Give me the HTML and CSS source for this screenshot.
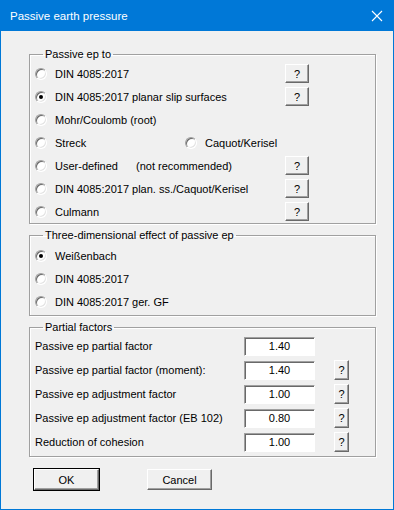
FILE: index.html
```html
<!DOCTYPE html>
<html lang="en">
<head>
  <meta charset="UTF-8">
  <title>Passive earth pressure</title>
  <link rel="stylesheet" href="styles.css">
</head>
<body>
  <div class="window">
    <div class="titlebar">
      <span class="title">Passive earth pressure</span>
      <svg class="close" width="12" height="12" viewBox="0 0 12 12">
        <path d="M1 1 L11 11 M11 1 L1 11" stroke="#fff" stroke-width="1.1" fill="none"/>
      </svg>
    </div>
    <div class="content">
      <fieldset class="group group-ep">
        <legend>Passive ep to</legend>
        <div class="row"><span class="radio"></span><span class="label">DIN 4085:2017</span><button class="help">?</button></div>
        <div class="row"><span class="radio checked"></span><span class="label">DIN 4085:2017 planar slip surfaces</span><button class="help">?</button></div>
        <div class="row"><span class="radio"></span><span class="label">Mohr/Coulomb (root)</span></div>
        <div class="row">
          <span class="radio"></span><span class="label label-short">Streck</span>
          <span class="radio"></span><span class="label">Caquot/Kerisel</span>
        </div>
        <div class="row"><span class="radio"></span><span class="label label-user">User-defined</span><span class="label note">(not recommended)</span><button class="help">?</button></div>
        <div class="row"><span class="radio"></span><span class="label">DIN 4085:2017 plan. ss./Caquot/Kerisel</span><button class="help">?</button></div>
        <div class="row"><span class="radio"></span><span class="label">Culmann</span><button class="help">?</button></div>
      </fieldset>

      <fieldset class="group group-3d">
        <legend>Three-dimensional effect of passive ep</legend>
        <div class="row"><span class="radio checked"></span><span class="label">Weißenbach</span></div>
        <div class="row"><span class="radio"></span><span class="label">DIN 4085:2017</span></div>
        <div class="row"><span class="radio"></span><span class="label">DIN 4085:2017 ger. GF</span></div>
      </fieldset>

      <fieldset class="group group-factors">
        <legend>Partial factors</legend>
        <div class="frow"><span class="flabel">Passive ep partial factor</span><span class="field">1.40</span></div>
        <div class="frow"><span class="flabel">Passive ep partial factor (moment):</span><span class="field">1.40</span><button class="help help-small">?</button></div>
        <div class="frow"><span class="flabel">Passive ep adjustment factor</span><span class="field">1.00</span><button class="help help-small">?</button></div>
        <div class="frow"><span class="flabel">Passive ep adjustment factor (EB 102)</span><span class="field">0.80</span><button class="help help-small">?</button></div>
        <div class="frow"><span class="flabel">Reduction of cohesion</span><span class="field">1.00</span><button class="help help-small">?</button></div>
      </fieldset>

      <div class="actions">
        <button class="btn btn-default">OK</button>
        <button class="btn">Cancel</button>
      </div>
    </div>
  </div>
</body>
</html>
```

FILE: styles.css
```css
:root {
  --blue: #0078d7;
  --face: #f0f0f0;
  --shadow: #a0a0a0;
  --dark: #696969;
  --text: #000;
}
html, body {
  margin: 0;
  padding: 0;
  background: var(--face);
}
.window {
  width: 394px;
  height: 510px;
  box-sizing: border-box;
  border: 1px solid var(--blue);
  background: var(--face);
  font-family: 'Liberation Sans', Arial, sans-serif;
  font-size: 11px;
  color: var(--text);
}
.titlebar {
  height: 30px;
  background: var(--blue);
  display: flex;
  align-items: center;
  justify-content: space-between;
  padding: 0 10px 0 9px;
}
.title {
  color: #fff;
  font-size: 11.5px;
}
.close {
  display: block;
}
.content {
  padding: 16px 17px 0 28px;
}
.group {
  margin: 0 0 4px 0;
  padding: 1px 0 1px 5px;
  min-width: 0;
  border: 1px solid var(--shadow);
  box-shadow: inset 1px 1px 0 #fff, 1px 1px 0 #fff;
}
.group legend {
  margin-left: 8px;
  padding: 0 2px;
  line-height: 14px;
}
.group-ep {
  padding-bottom: 0;
}
.group-3d {
  padding: 2px 0 2px 5px;
}
.row {
  display: flex;
  align-items: center;
  height: 23px;
}
.radio {
  position: relative;
  width: 12px;
  height: 12px;
  box-sizing: border-box;
  border-radius: 50%;
  border: 1px solid;
  border-color: var(--shadow) #fff #fff var(--shadow);
  background: #fff;
  box-shadow: inset 1px 1px 0 var(--dark), inset -1px -1px 0 #e3e3e3;
  flex: none;
}
.radio.checked::after {
  content: '';
  position: absolute;
  left: 3px;
  top: 3px;
  width: 4px;
  height: 4px;
  border-radius: 50%;
  background: #000;
}
.label {
  margin-left: 8px;
  white-space: nowrap;
}
.label-short {
  width: 130px;
}
.label-user {
  width: 81px;
}
.note {
  margin-left: 0;
}
.help {
  margin-left: auto;
  margin-right: 66px;
  width: 24px;
  height: 19px;
  padding: 0;
  box-sizing: border-box;
  font-family: inherit;
  font-size: 11px;
  color: #000;
  background: var(--face);
  border: 1px solid;
  border-color: #fff var(--dark) var(--dark) #fff;
  box-shadow: inset -1px -1px 0 var(--shadow);
}
.group-factors {
  padding: 0 0 2px 5px;
}
.frow {
  display: flex;
  align-items: center;
  height: 24px;
}
.flabel {
  width: 209px;
  white-space: nowrap;
}
.field {
  width: 71px;
  height: 19px;
  box-sizing: border-box;
  display: flex;
  align-items: center;
  justify-content: center;
  background: #fff;
  border: 1px solid;
  border-color: var(--shadow) #fff #fff var(--shadow);
  box-shadow: inset 1px 1px 0 var(--dark);
}
.help-small {
  margin-left: 19px;
  margin-right: 0;
  width: 15px;
  height: 20px;
}
.actions {
  display: flex;
  gap: 48px;
  padding: 8px 0 0 5px;
}
.btn {
  width: 65px;
  height: 21px;
  padding: 0;
  box-sizing: border-box;
  font-family: inherit;
  font-size: 11px;
  color: #000;
  background: var(--face);
  border: 1px solid;
  border-color: #fff var(--dark) var(--dark) #fff;
  box-shadow: inset -1px -1px 0 var(--shadow);
}
.btn-default {
  outline: 1px solid #000;
}
```
